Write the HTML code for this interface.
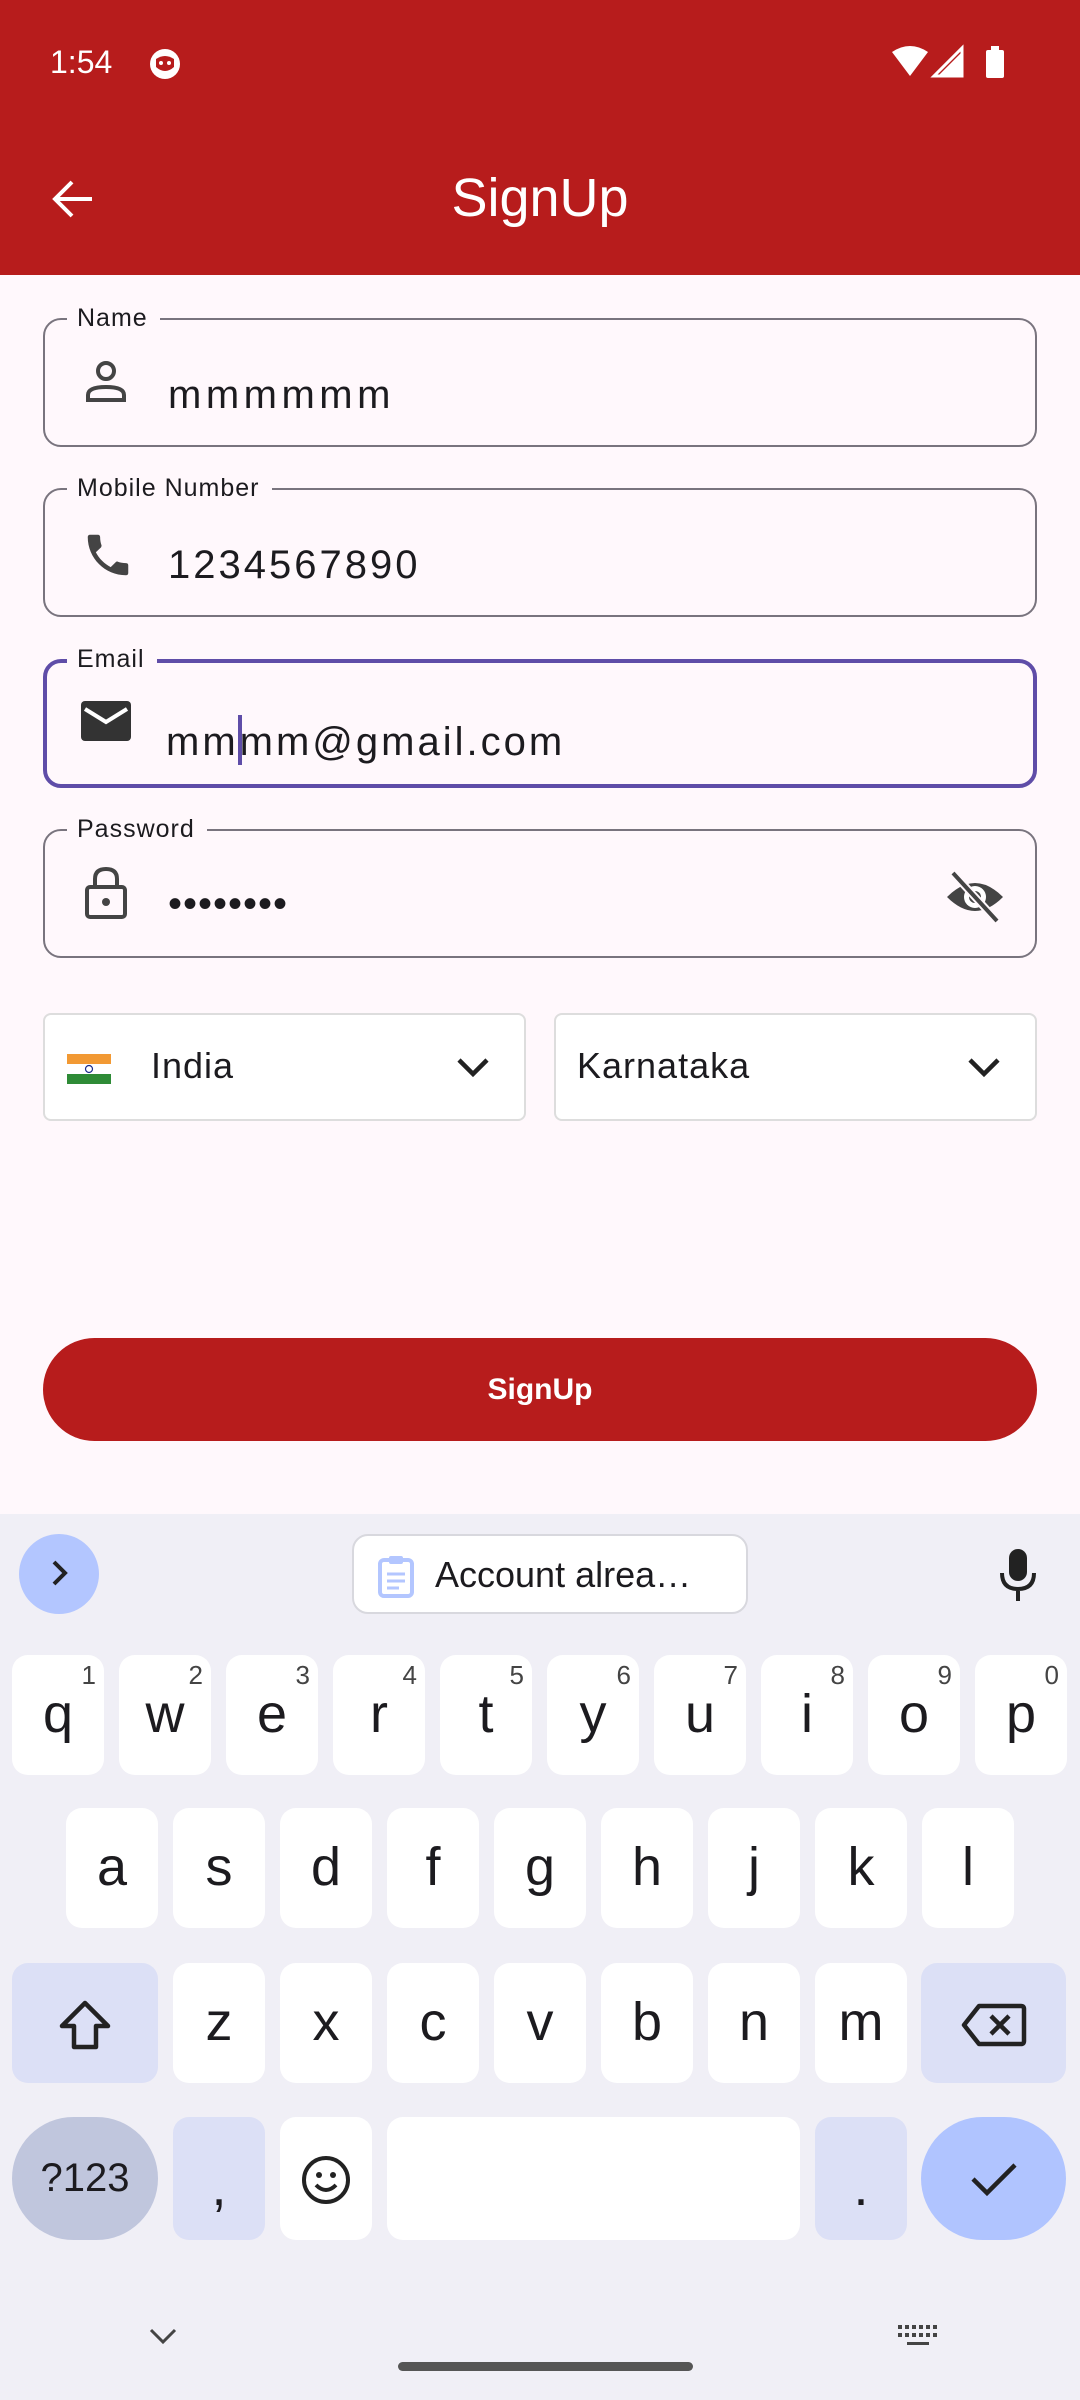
<!DOCTYPE html>
<html><head><meta charset="utf-8"><style>
*{margin:0;padding:0;box-sizing:border-box}
body{width:1080px;height:2400px;position:relative;overflow:hidden;background:#FFF8FC;font-family:"Liberation Sans","DejaVu Sans",sans-serif;color:#1c1b1f}
.abs{position:absolute}
.bar{left:0;top:0;width:1080px;height:275px;background:#B71C1C}
.field{position:absolute;left:43px;width:994px;height:129px;border:2px solid #79747E;border-radius:18px}
.lbl{position:absolute;left:22px;top:-17px;background:#FFF8FC;padding:0 12px 0 10px;font-size:25px;line-height:30px;letter-spacing:1px;color:#1c1b1f}
.val{position:absolute;left:123px;top:52px;font-size:40px;letter-spacing:3px;line-height:46px}
.ico{position:absolute;left:36px;top:38px}
.dd{position:absolute;top:1013px;height:108px;border:2px solid #ddd;border-radius:8px;background:#fff}
.key{position:absolute;width:92px;height:120px;background:#fff;border-radius:16px;text-align:center;font-size:54px;line-height:118px;color:#1c1b1f}
.key sup{position:absolute;right:8px;top:6px;font-size:26px;line-height:28px;color:#444}
.sp{background:#DCE0F6}
</style></head><body>
<div class="abs bar"></div>
<div class="abs" style="left:50px;top:44px;font-size:32px;color:#fff">1:54</div>
<svg class="abs" style="left:148px;top:47px" width="34" height="34" viewBox="0 0 34 34"><circle cx="17" cy="17" r="15" fill="#fff"/><path d="M8 12 Q17 6 26 12 L26 20 Q17 28 8 20Z" fill="#B71C1C"/><circle cx="13" cy="16" r="2" fill="#fff"/><circle cx="21" cy="16" r="2" fill="#fff"/></svg>
<svg class="abs" style="left:890px;top:44px" width="120" height="36" viewBox="0 0 120 36"><path d="M2 8 Q20 -4 38 8 L20 32Z" fill="#fff"/><path d="M72 4 L72 32 L44 32Z" fill="none" stroke="#fff" stroke-width="3"/><path d="M62 18 L72 8 L72 32 L48 32Z" fill="#fff"/><rect x="96" y="6" width="18" height="28" rx="2" fill="#fff"/><rect x="101" y="2" width="8" height="5" fill="#fff"/></svg>
<svg class="abs" style="left:50px;top:179px" width="44" height="40" viewBox="0 0 44 40"><path d="M42 20H6M22 3L5 20L22 37" fill="none" stroke="#fff" stroke-width="4"/></svg>
<div class="abs" style="left:0;width:1080px;top:166px;text-align:center;font-size:54px;color:#fff;line-height:64px">SignUp</div>

<div class="field" style="top:318px"><div class="lbl">Name</div>
<svg class="ico" width="50" height="50" viewBox="0 0 50 50"><circle cx="25" cy="13" r="8" fill="none" stroke="#444" stroke-width="4"/><path d="M7 42 V37 Q7 29 25 29 Q43 29 43 37 V42Z" fill="none" stroke="#444" stroke-width="4"/></svg>
<div class="val" style="letter-spacing:4.5px">mmmmmm</div></div>

<div class="field" style="top:488px"><div class="lbl">Mobile Number</div>
<svg class="ico" width="54" height="54" viewBox="0 0 24 24"><path fill="#444" d="M6.6 10.8c1.4 2.8 3.8 5.1 6.6 6.6l2.2-2.2c.3-.3.7-.4 1-.2 1.1.4 2.300 .6 3.6.6.6 0 1 .4 1 1V20c0 .6-.4 1-1 1-9.4 0-17-7.6-17-17 0-.6.4-1 1-1h3.5c.6 0 1 .4 1 1 0 1.3.2 2.5.6 3.6.1.3 0 .7-.2 1L6.6 10.8z"/></svg>
<div class="val">1234567890</div></div>

<div class="field" style="top:659px;border:4px solid #5F4DA8"><div class="lbl" style="top:-19px;left:20px">Email</div>
<svg class="ico" width="54" height="44" viewBox="0 0 54 44" style="top:36px;left:32px"><rect x="2" y="2" width="50" height="40" rx="4" fill="#333"/><path d="M6 10 L27 23 L48 10" fill="none" stroke="#fff" stroke-width="4"/></svg>
<div class="val" style="left:119px">mm<span style="display:inline-block;width:4px;height:50px;background:#5F4DA8;vertical-align:-10px;margin:0 -2px 0 -1px"></span>mm@gmail.com</div></div>

<div class="field" style="top:829px"><div class="lbl">Password</div>
<svg class="ico" width="50" height="56" viewBox="0 0 50 56" style="top:34px"><path d="M14 22 V14 Q14 4 25 4 Q36 4 36 14 V22" fill="none" stroke="#444" stroke-width="4"/><rect x="6" y="22" width="38" height="30" rx="3" fill="none" stroke="#444" stroke-width="4"/><circle cx="25" cy="37" r="4" fill="#444"/></svg>
<div class="val" style="font-size:40px;letter-spacing:1px;top:50px">••••••••</div>
<svg class="abs" style="left:900px;top:38px" width="60" height="56" viewBox="0 0 60 56"><path d="M2 28 Q30 0 58 28 Q30 56 2 28Z" fill="#444"/><circle cx="30" cy="28" r="11" fill="#fff"/><circle cx="30" cy="28" r="6" fill="#444"/><path d="M8 4 L52 52" stroke="#FFF8FC" stroke-width="8"/><path d="M8 4 L52 52" stroke="#444" stroke-width="4"/></svg>
</div>

<div class="dd" style="left:43px;width:483px">
<svg class="abs" style="left:22px;top:39px" width="44" height="30" viewBox="0 0 44 30"><rect width="44" height="10" fill="#F29933"/><rect y="10" width="44" height="10" fill="#fff"/><rect y="20" width="44" height="10" fill="#2E8B36"/><circle cx="22" cy="15" r="3.5" fill="none" stroke="#1a2a8a" stroke-width="1.2"/></svg>
<div class="abs" style="left:106px;top:30px;font-size:36px;letter-spacing:1px">India</div>
<svg class="abs" style="left:410px;top:40px" width="36" height="24" viewBox="0 0 36 24"><path d="M4 5 L18 19 L32 5" fill="none" stroke="#222" stroke-width="4.5"/></svg></div>
<div class="dd" style="left:554px;width:483px">
<div class="abs" style="left:21px;top:30px;font-size:36px;letter-spacing:1px">Karnataka</div>
<svg class="abs" style="left:410px;top:40px" width="36" height="24" viewBox="0 0 36 24"><path d="M4 5 L18 19 L32 5" fill="none" stroke="#222" stroke-width="4.5"/></svg></div>

<div class="abs" style="left:43px;top:1338px;width:994px;height:103px;background:#B71C1C;border-radius:52px;color:#fff;font-weight:bold;font-size:30px;text-align:center;line-height:103px">SignUp</div>

<div class="abs" style="left:0;top:1514px;width:1080px;height:886px;background:#F0EFF6"></div>
<div class="abs" style="left:19px;top:1534px;width:80px;height:80px;border-radius:40px;background:#B3C6FF"></div>
<svg class="abs" style="left:44px;top:1558px" width="30" height="30" viewBox="0 0 30 30"><path d="M10 4 L21 15 L10 26" fill="none" stroke="#222" stroke-width="4"/></svg>
<div class="abs" style="left:352px;top:1534px;width:396px;height:80px;border:2px solid #d8d8de;border-radius:16px;background:#fff"></div>
<svg class="abs" style="left:377px;top:1554px" width="38" height="44" viewBox="0 0 38 44"><rect x="3" y="6" width="32" height="36" rx="4" fill="none" stroke="#B3C6FF" stroke-width="4"/><rect x="12" y="2" width="14" height="8" rx="2" fill="#B3C6FF"/><path d="M10 20H28M10 27H28M10 34H22" stroke="#B3C6FF" stroke-width="3"/></svg>
<div class="abs" style="left:435px;top:1554px;font-size:36px;line-height:42px;color:#1c1b1f">Account alrea…</div>
<svg class="abs" style="left:998px;top:1547px" width="40" height="56" viewBox="0 0 40 56"><rect x="11" y="2" width="18" height="32" rx="9" fill="#222"/><path d="M4 26 Q4 42 20 42 Q36 42 36 26M20 42V54" fill="none" stroke="#222" stroke-width="4"/></svg>

<div class="key" style="left:12px;top:1655px">q<sup>1</sup></div>
<div class="key" style="left:119px;top:1655px">w<sup>2</sup></div>
<div class="key" style="left:226px;top:1655px">e<sup>3</sup></div>
<div class="key" style="left:333px;top:1655px">r<sup>4</sup></div>
<div class="key" style="left:440px;top:1655px">t<sup>5</sup></div>
<div class="key" style="left:547px;top:1655px">y<sup>6</sup></div>
<div class="key" style="left:654px;top:1655px">u<sup>7</sup></div>
<div class="key" style="left:761px;top:1655px">i<sup>8</sup></div>
<div class="key" style="left:868px;top:1655px">o<sup>9</sup></div>
<div class="key" style="left:975px;top:1655px">p<sup>0</sup></div>

<div class="key" style="left:66px;top:1808px">a</div>
<div class="key" style="left:173px;top:1808px">s</div>
<div class="key" style="left:280px;top:1808px">d</div>
<div class="key" style="left:387px;top:1808px">f</div>
<div class="key" style="left:494px;top:1808px">g</div>
<div class="key" style="left:601px;top:1808px">h</div>
<div class="key" style="left:708px;top:1808px">j</div>
<div class="key" style="left:815px;top:1808px">k</div>
<div class="key" style="left:922px;top:1808px">l</div>

<div class="key sp" style="left:12px;top:1963px;width:146px"><svg style="margin-top:36px" width="54" height="54" viewBox="0 0 54 54"><path d="M27 4 L50 27 H38 V48 H16 V27 H4Z" fill="none" stroke="#222" stroke-width="4.5" stroke-linejoin="round"/></svg></div>
<div class="key" style="left:173px;top:1963px">z</div>
<div class="key" style="left:280px;top:1963px">x</div>
<div class="key" style="left:387px;top:1963px">c</div>
<div class="key" style="left:494px;top:1963px">v</div>
<div class="key" style="left:601px;top:1963px">b</div>
<div class="key" style="left:708px;top:1963px">n</div>
<div class="key" style="left:815px;top:1963px">m</div>
<div class="key sp" style="left:921px;top:1963px;width:145px"><svg style="margin-top:40px" width="66" height="44" viewBox="0 0 66 44"><path d="M18 3 H60 Q63 3 63 6 V38 Q63 41 60 41 H18 L3 22Z" fill="none" stroke="#222" stroke-width="4.5" stroke-linejoin="round"/><path d="M30 13 L48 31 M48 13 L30 31" stroke="#222" stroke-width="4.5"/></svg></div>

<div class="key" style="left:12px;top:2117px;width:146px;height:123px;border-radius:62px;background:#C0C6DD;font-size:40px;line-height:123px">?123</div>
<div class="key sp" style="left:173px;top:2117px;height:123px;line-height:140px">,</div>
<div class="key" style="left:280px;top:2117px;height:123px"><svg style="margin-top:38px" width="50" height="50" viewBox="0 0 50 50"><circle cx="25" cy="25" r="22" fill="none" stroke="#222" stroke-width="4"/><circle cx="18" cy="20" r="3" fill="#222"/><circle cx="32" cy="20" r="3" fill="#222"/><path d="M15 30 Q25 40 35 30" fill="none" stroke="#222" stroke-width="4"/></svg></div>
<div class="key" style="left:387px;top:2117px;width:413px;height:123px"></div>
<div class="key sp" style="left:815px;top:2117px;height:123px;line-height:140px">.</div>
<div class="key" style="left:921px;top:2117px;width:145px;height:123px;border-radius:62px;background:#B0C4FF"><svg style="margin-top:42px" width="50" height="40" viewBox="0 0 50 40"><path d="M4 20 L18 34 L46 6" fill="none" stroke="#222" stroke-width="4.5"/></svg></div>

<svg class="abs" style="left:148px;top:2326px" width="30" height="20" viewBox="0 0 30 20"><path d="M3 4 L15 16 L27 4" fill="none" stroke="#444" stroke-width="3"/></svg>
<svg class="abs" style="left:898px;top:2325px" width="40" height="24" viewBox="0 0 40 24"><g fill="#444"><rect x="0" y="0" width="4" height="4"/><rect x="7" y="0" width="4" height="4"/><rect x="14" y="0" width="4" height="4"/><rect x="21" y="0" width="4" height="4"/><rect x="28" y="0" width="4" height="4"/><rect x="35" y="0" width="4" height="4"/><rect x="0" y="8" width="4" height="4"/><rect x="7" y="8" width="4" height="4"/><rect x="14" y="8" width="4" height="4"/><rect x="21" y="8" width="4" height="4"/><rect x="28" y="8" width="4" height="4"/><rect x="35" y="8" width="4" height="4"/><rect x="9" y="17" width="22" height="3"/></g></svg>
<div class="abs" style="left:398px;top:2362px;width:295px;height:9px;border-radius:5px;background:#555"></div>
</body></html>
